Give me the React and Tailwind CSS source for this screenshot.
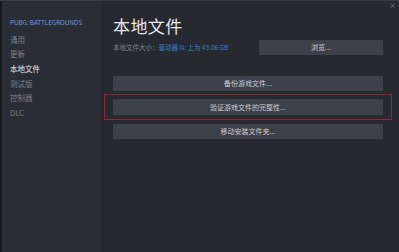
export default function App() {
    const items = ['通用', '更新', '本地文件', '测试版', '控制器', 'DLC']
    const font = { fontFamily: '"Noto Sans CJK SC", "Noto Sans", sans-serif' }

    return (
        <div className="w-[399px] h-[252px] flex bg-[#1c1e23] border-t border-[#3a3e48] overflow-hidden" style={font}>
            <div className="w-[2px] bg-[#16171b]" />
            <div className="w-[99px] bg-[#2a2d35] pt-[17px] pl-[8px] flex flex-col">
                <p className="text-[6.5px] text-[#6a9bd8] tracking-tight mb-[5px]">PUBG: BATTLEGROUNDS</p>
                {items.map(item => (
                    <p
                        key={item}
                        className={`text-[7.5px] leading-[14.6px] ${item === '本地文件' ? 'text-[#e8e8ea]' : 'text-[#7d808a]'}`}
                    >
                        {item}
                    </p>
                ))}
            </div>
            <div className="flex-1 bg-[#262930] relative pl-[12px] pr-[16px] pt-[14px]">
                <span className="absolute right-[3px] top-[1px] text-[7px] text-[#8a8d96] leading-none">×</span>
                <h1 className="text-[17px] leading-[22px] text-[#e6e7ea] tracking-wide">本地文件</h1>
                <div className="flex items-center mt-[3px]">
                    <p className="text-[6.5px] text-[#80838c] whitespace-nowrap">
                        本地文件大小：<span className="text-[#3d7fd6]">驱动器 N: 上为 43.06 GB</span>
                    </p>
                    <button className="ml-auto w-[124px] h-[15px] bg-[#3d414c] text-[7px] text-[#c9cbd1]">浏览...</button>
                </div>
                <div className="mt-[21px] flex flex-col">
                    <button className="h-[15px] bg-[#3d414c] text-[7px] text-[#c9cbd1]">备份游戏文件...</button>
                    <div className="mt-[3px] -mx-[9px] px-[8px] py-[4px] border border-[#8a2a2e] flex flex-col">
                        <button className="block w-full h-[16px] bg-[#3d414c] text-[7px] text-[#c9cbd1]">验证游戏文件的完整性...</button>
                    </div>
                    <button className="mt-[4px] h-[15px] bg-[#3d414c] text-[7px] text-[#c9cbd1]">移动安装文件夹...</button>
                </div>
            </div>
        </div>
    )
}
